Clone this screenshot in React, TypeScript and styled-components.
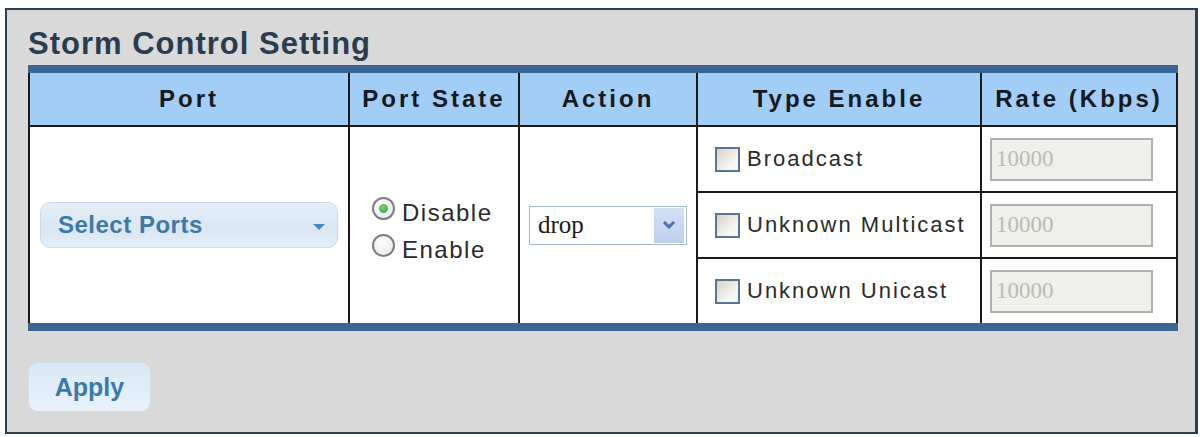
import styled, { createGlobalStyle } from 'styled-components'

const GlobalStyle = createGlobalStyle`
  body {
    margin: 0;
    background: #ffffff;
    font-family: "Liberation Sans", Arial, sans-serif;
  }
`

const Panel = styled.div`
  box-sizing: border-box;
  margin: 8px 0 0 5px;
  width: 1193px;
  height: 426px;
  border: 2px solid #2b3f55;
  border-right-width: 3px;
  background: #d9d9d9;
  padding: 16px 0 0 21px;
`

const Title = styled.h1`
  margin: 0;
  font-size: 31px;
  line-height: 36px;
  font-weight: 700;
  letter-spacing: 1px;
  color: #2a3c50;
`

const Grid = styled.table`
  margin-top: 3px;
  width: 1148px;
  table-layout: fixed;
  border-collapse: collapse;
  border-top: 8px solid #3b6694;
  border-bottom: 8px solid #3b6694;
  border-left: 2px solid #1d2a3a;
  border-right: 2px solid #1d2a3a;
`

const HeadCell = styled.th`
  height: 52px;
  padding: 0;
  background: #a2cdf6;
  border: 2px solid #1a1a1a;
  border-top: none;
  font-size: 24px;
  font-weight: 700;
  letter-spacing: 3px;
  color: #151a20;
  text-align: center;
`

const Cell = styled.td<{ $pad?: number }>`
  height: 64px;
  padding: 0 0 0 ${p => p.$pad ?? 0}px;
  background: #ffffff;
  border: 2px solid #1a1a1a;
  vertical-align: middle;
`

const PortButton = styled.button`
  box-sizing: border-box;
  display: flex;
  align-items: center;
  justify-content: space-between;
  margin: 0 auto;
  width: 298px;
  height: 46px;
  padding: 0 12px 0 17px;
  border: 1px solid #c9dbea;
  border-radius: 10px;
  background: linear-gradient(#e4eef7, #d9e7f3 60%, #e3eef8);
  font-family: "Liberation Sans", Arial, sans-serif;
  font-size: 24px;
  font-weight: 700;
  letter-spacing: 0.5px;
  color: #3d79a8;
`

const Caret = styled.span`
  width: 0;
  height: 0;
  border-left: 6px solid transparent;
  border-right: 6px solid transparent;
  border-top: 6px solid #4a86b8;
  margin-top: 4px;
`

const RadioGroup = styled.div`
  display: flex;
  flex-direction: column;
  gap: 13px;
  padding: 12px 0 0 22px;
`

const Option = styled.label`
  display: flex;
  align-items: center;
  gap: 7px;
  font-size: 24px;
  line-height: 24px;
  letter-spacing: 1.5px;
  color: #2a2a2a;
`

const RadioDot = styled.span<{ $on?: boolean }>`
  box-sizing: border-box;
  position: relative;
  flex: none;
  width: 23px;
  height: 23px;
  border-radius: 50%;
  border: 2px solid #7d7d7d;
  background: radial-gradient(circle at 40% 35%, #ffffff, #e4e4e4);
  margin-top: -8px;

  &::after {
    content: '';
    display: ${p => (p.$on ? 'block' : 'none')};
    position: absolute;
    left: 5px;
    top: 5px;
    width: 9px;
    height: 9px;
    border-radius: 50%;
    background: radial-gradient(circle at 40% 35%, #7fd27f, #2f9a3a);
  }
`

const DropSelect = styled.div`
  box-sizing: border-box;
  display: flex;
  align-items: center;
  justify-content: space-between;
  margin: 0 auto;
  width: 158px;
  height: 39px;
  padding: 0 2px 0 8px;
  border: 1px solid #a7b9d0;
  background: #ffffff;
  font-family: "Liberation Serif", "Times New Roman", serif;
  font-size: 25px;
  color: #1a1a1a;
`

const DropArrow = styled.span`
  display: flex;
  align-items: center;
  justify-content: center;
  width: 30px;
  height: 35px;
  background: linear-gradient(#d3e0f4, #bfd0ec);
`

const TypeRow = styled.label`
  display: flex;
  align-items: center;
  gap: 7px;
  font-size: 22px;
  letter-spacing: 2px;
  color: #2a2a2a;
`

const Box = styled.span`
  box-sizing: border-box;
  width: 25px;
  height: 25px;
  border: 2px solid #5b7590;
  background: linear-gradient(135deg, #d8d2c4, #f6f6f4 70%);
`

const RateInput = styled.input`
  box-sizing: border-box;
  display: block;
  width: 163px;
  height: 43px;
  padding: 0 0 0 4px;
  border: 2px solid #b0b0ac;
  background: #efefec;
  font-family: "Liberation Serif", "Times New Roman", serif;
  font-size: 23px;
  color: #bbbbb2;
`

const Footer = styled.div`
  margin-top: 31px;
`

const ApplyButton = styled.button`
  box-sizing: border-box;
  width: 123px;
  height: 50px;
  border: 1px solid #cfdeec;
  border-radius: 10px;
  background: linear-gradient(#dbe9f6, #e0edf9 55%, #e9f2fb);
  font-family: "Liberation Sans", Arial, sans-serif;
  font-size: 25px;
  font-weight: 700;
  color: #3a7aa7;
`

const types = ['Broadcast', 'Unknown Multicast', 'Unknown Unicast']

function App() {
  return (
    <>
      <GlobalStyle />
      <Panel>
        <Title>Storm Control Setting</Title>
        <Grid>
          <colgroup>
            <col style={{ width: 320 }} />
            <col style={{ width: 170 }} />
            <col style={{ width: 178 }} />
            <col style={{ width: 284 }} />
            <col style={{ width: 196 }} />
          </colgroup>
          <thead>
            <tr>
              <HeadCell>Port</HeadCell>
              <HeadCell>Port State</HeadCell>
              <HeadCell>Action</HeadCell>
              <HeadCell>Type Enable</HeadCell>
              <HeadCell>Rate (Kbps)</HeadCell>
            </tr>
          </thead>
          <tbody>
            {types.map((t, i) => (
              <tr key={t}>
                {i === 0 && (
                  <>
                    <Cell rowSpan={3}>
                      <PortButton>
                        Select Ports
                        <Caret />
                      </PortButton>
                    </Cell>
                    <Cell rowSpan={3}>
                      <RadioGroup>
                        <Option>
                          <RadioDot $on />
                          Disable
                        </Option>
                        <Option>
                          <RadioDot />
                          Enable
                        </Option>
                      </RadioGroup>
                    </Cell>
                    <Cell rowSpan={3}>
                      <DropSelect>
                        drop
                        <DropArrow>
                          <svg width="14" height="10" viewBox="0 0 14 10">
                            <path d="M2 2 L7 7 L12 2" fill="none" stroke="#4b6eb0" strokeWidth="3" />
                          </svg>
                        </DropArrow>
                      </DropSelect>
                    </Cell>
                  </>
                )}
                <Cell $pad={17}>
                  <TypeRow>
                    <Box />
                    {t}
                  </TypeRow>
                </Cell>
                <Cell $pad={8}>
                  <RateInput disabled value="10000" readOnly />
                </Cell>
              </tr>
            ))}
          </tbody>
        </Grid>
        <Footer>
          <ApplyButton>Apply</ApplyButton>
        </Footer>
      </Panel>
    </>
  )
}

export default App
